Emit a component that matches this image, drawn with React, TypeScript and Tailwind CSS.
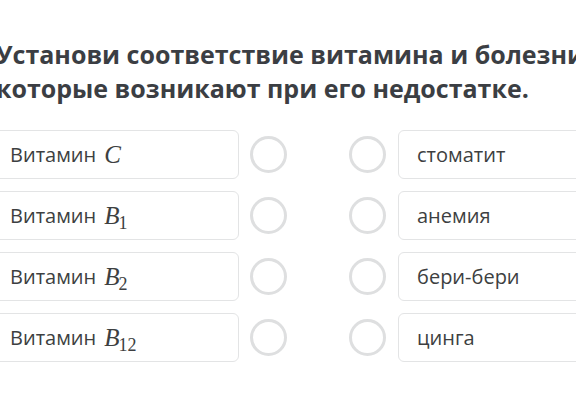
const font = { fontFamily: '"Open Sans", "Liberation Sans", sans-serif' };

const left = [
  { sym: "C", sub: "" },
  { sym: "B", sub: "1" },
  { sym: "B", sub: "2" },
  { sym: "B", sub: "12" },
];

const right = ["стоматит", "анемия", "бери-бери", "цинга"];

function MathVar({ sym, sub }: { sym: string; sub: string }) {
  return (
    <span className="ml-[8px] inline-flex items-baseline font-['Liberation_Serif',serif] text-[25px]">
      <i>{sym}</i>
      {sub && <span className="-ml-[1px] relative top-[5px] text-[18px]">{sub}</span>}
    </span>
  );
}

function Circle() {
  return <div className="h-[37px] w-[37px] rounded-full border-[3px] border-[#dedfe0] bg-white" />;
}

export default function App() {
  return (
    <div className="h-[406px] w-[576px] overflow-hidden bg-white" style={font}>
      <div className="-ml-[9px] w-[660px] pt-[37px]">
        <h1 className="ml-[5px] whitespace-nowrap text-[25px] font-bold leading-[34px] text-[#3b3e43]">
          Установи соответствие витамина и болезни,
          <br />
          которые возникают при его недостатке.
        </h1>

        <div className="mt-[25px] flex flex-col gap-[12px]">
          {left.map((l, i) => (
            <div key={i} className="flex h-[49px] items-center">
              <div className="flex h-full w-[248px] items-center rounded-[6px] border border-[#e3e4e5] pl-[18px] text-[20px] text-[#3d3f41]">
                Витамин
                <MathVar sym={l.sym} sub={l.sub} />
              </div>
              <div className="ml-[11px]">
                <Circle />
              </div>
              <div className="ml-[62px]">
                <Circle />
              </div>
              <div className="ml-[12px] flex h-full w-[248px] items-center rounded-[6px] border border-[#e3e4e5] pl-[18px] text-[20px] text-[#3d3f41]">
                {right[i]}
              </div>
            </div>
          ))}
        </div>
      </div>
    </div>
  );
}
